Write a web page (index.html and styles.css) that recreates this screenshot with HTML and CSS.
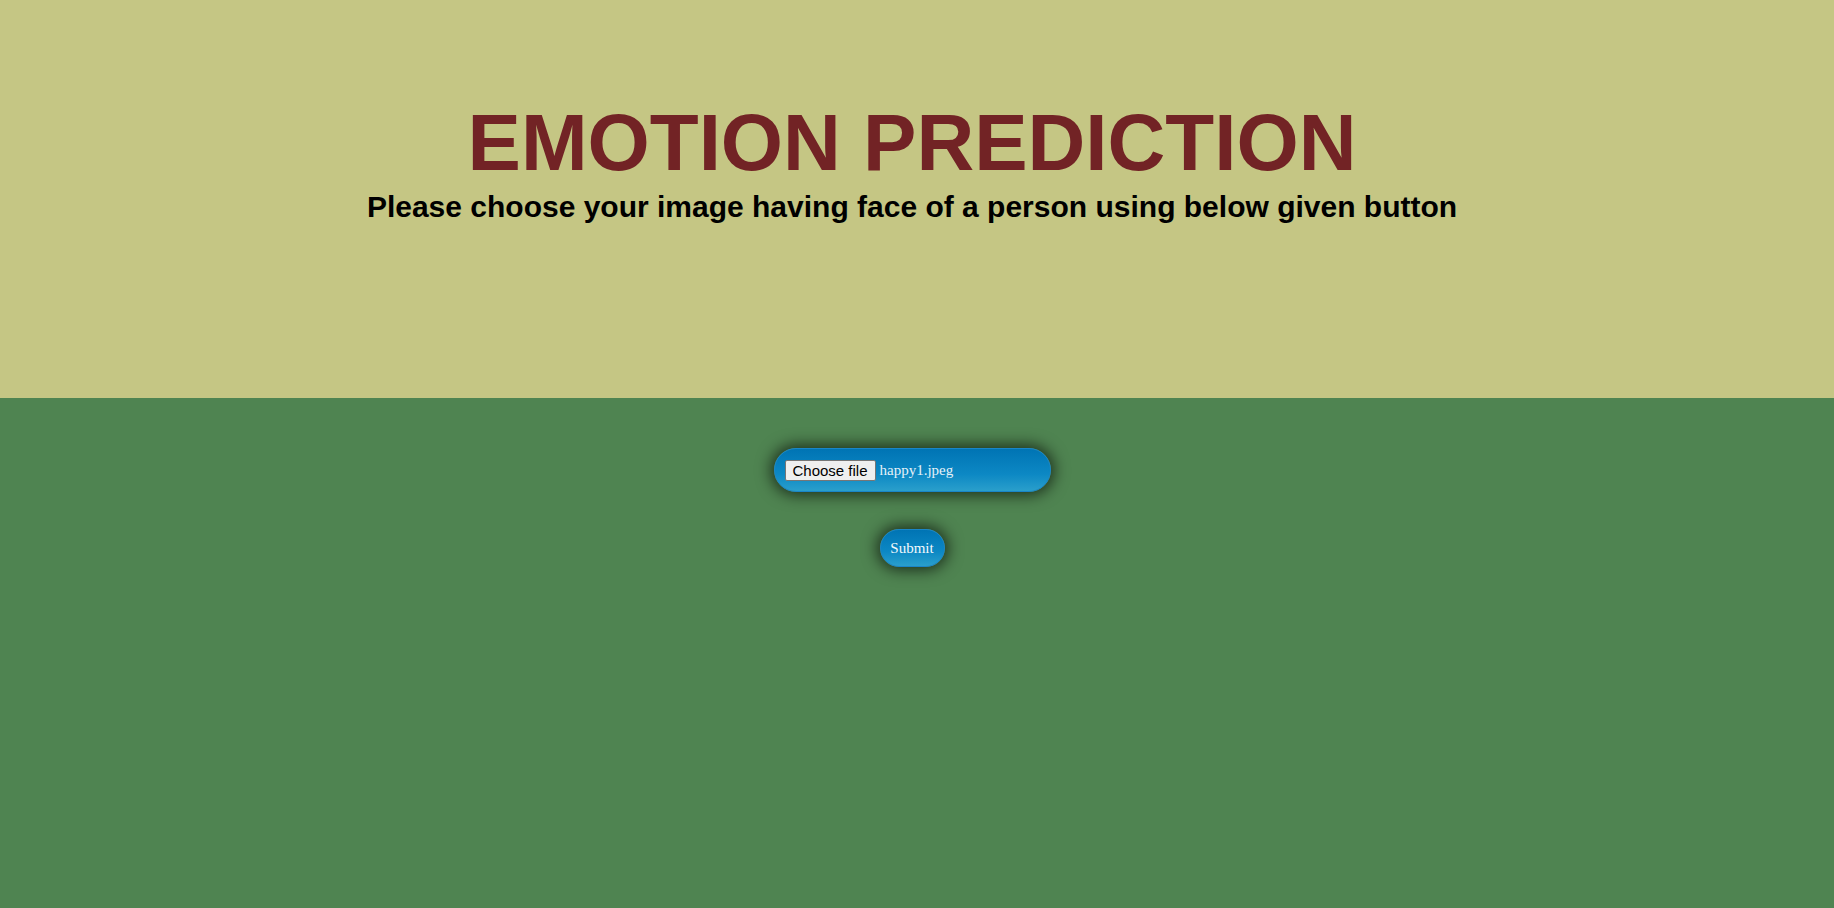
FILE: index.html
```html
<!DOCTYPE html>
<html>
<head>
<meta charset="utf-8">
<link rel="stylesheet" href="styles.css">
<title>Emotion Prediction</title>
</head>
<body>
<header class="hero">
  <div class="hero-inner">
    <h1 class="title">EMOTION PREDICTION</h1>
    <h2 class="subtitle">Please choose your image having face of a person using below given button</h2>
  </div>
</header>
<main class="content">
  <form class="upload-form">
    <label class="file-pill">
      <span class="file-btn">Choose file</span>
      <span class="file-name">happy1.jpeg</span>
    </label>
    <button type="button" class="submit-btn">Submit</button>
  </form>
</main>
</body>
</html>
```
FILE: styles.css
```css
html, body {
  margin: 0;
  padding: 0;
  height: 100%;
}
body {
  background: #4f8451;
  font-family: "Liberation Serif", serif;
}
.hero {
  background: #c5c684;
  height: 398px;
  box-sizing: border-box;
  padding-top: 97px;
}
.hero-inner {
  padding-right: 10px;
  text-align: center;
}
.title {
  margin: 0;
  font-family: "Liberation Sans", Arial, sans-serif;
  font-weight: bold;
  font-size: 80px;
  color: #722325;
  line-height: normal;
}
.subtitle {
  margin: 1px 0 0;
  font-family: "Liberation Sans", Arial, sans-serif;
  font-weight: bold;
  font-size: 30px;
  color: #000;
  line-height: normal;
}
.content {
  padding-top: 50px;
  padding-right: 10px;
}
.upload-form {
  display: flex;
  flex-direction: column;
  align-items: center;
  gap: 37px;
}
.file-pill {
  display: flex;
  align-items: center;
  box-sizing: border-box;
  width: 277px;
  height: 44px;
  padding: 0 10px;
  border: 1px solid #1a86c8;
  border-radius: 22px;
  background: linear-gradient(to bottom, #0074b4, #0c88c4 60%, #2a9fcb);
  box-shadow: 0 0 15px 3px rgba(0, 0, 0, 0.65);
}
.file-btn {
  font-family: "Liberation Sans", Arial, sans-serif;
  font-size: 15px;
  color: #000;
  background: #efefef;
  border: 1px solid #767676;
  border-radius: 2px;
  padding: 1px 7px;
  line-height: normal;
}
.file-name {
  margin-left: 4px;
  font-size: 15px;
  color: #e6f2f8;
}
.submit-btn {
  width: 65px;
  height: 38px;
  box-sizing: border-box;
  border: 1px solid #1a86c8;
  border-radius: 19px;
  background: linear-gradient(to bottom, #0074b4, #0c88c4 60%, #2a9fcb);
  box-shadow: 0 0 15px 3px rgba(0, 0, 0, 0.65);
  color: #f2f8fb;
  font-family: "Liberation Serif", serif;
  font-size: 15px;
  padding: 0;
}
```
